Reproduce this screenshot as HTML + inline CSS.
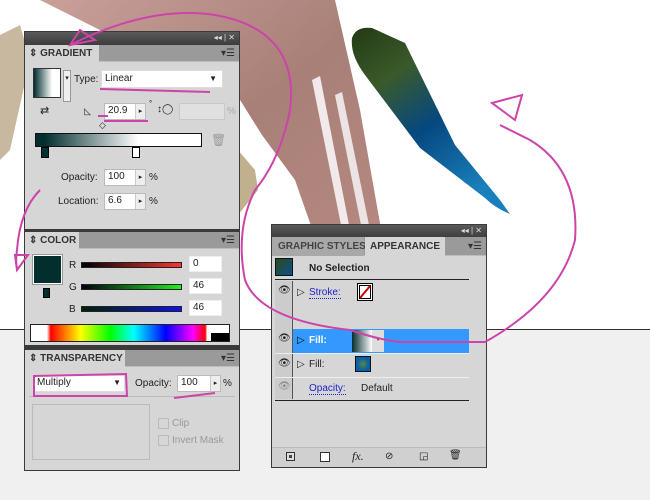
<!DOCTYPE html>
<html><head><meta charset="utf-8"><style>
*{margin:0;padding:0;box-sizing:border-box;white-space:nowrap}
body{width:650px;height:500px;position:relative;overflow:hidden;background:#fff;font-family:"Liberation Sans",sans-serif;font-size:10px;color:#222}
.abs{position:absolute}
.pan{position:absolute;background:#d6d6d6;border:1px solid #3a3a3a}
.topbar{position:absolute;left:0;right:0;top:0;height:13px;background:linear-gradient(#5a5a5a,#3c3c3c);color:#ddd;font-size:8px;text-align:right;padding-right:4px;line-height:12px}
.tabrow{position:absolute;left:0;right:0;height:17px;background:#9a9a9a;border-bottom:1px solid #bdbdbd}
.tab{position:absolute;left:0;top:0;height:17px;background:#d6d6d6;font-weight:bold;color:#333;font-size:10px;line-height:17px;padding-left:4px}
.menu{position:absolute;right:4px;top:3px;font-size:10px;color:#333}
.inp{position:absolute;background:#fff;border:1px solid #bbb;font-size:10px;line-height:14px;padding-left:3px}
.arr{position:absolute;width:10px;border-left:1px solid #ccc;background:#eee;font-size:7px;text-align:center}
.lbl{position:absolute;font-size:10px}
</style></head><body>
<div class="abs" style="left:0;top:329px;width:650px;height:171px;background:#f0f0f0;border-top:1px solid #333"></div>
<svg class="abs" style="left:0;top:0" width="650" height="330">
<defs>
<linearGradient id="br" x1="0" y1="0" x2="1" y2="1"><stop offset="0" stop-color="#caa09a"/><stop offset=".5" stop-color="#a88078"/><stop offset="1" stop-color="#b88a82"/></linearGradient>
<linearGradient id="kn" x1="0" y1="0" x2="0.6" y2="1"><stop offset="0" stop-color="#233a14"/><stop offset=".3" stop-color="#3a5a2a"/><stop offset=".6" stop-color="#064880"/><stop offset="1" stop-color="#1a80bb"/></linearGradient>
</defs>
<polygon points="0,35 20,25 30,60 10,150 0,160" fill="#c8b8a0"/>
<polygon points="238,150 255,170 258,190 238,215" fill="#c0b08e"/>
<polygon points="40,0 335,0 360,110 390,280 330,280 295,180 262,135 240,100" fill="url(#br)"/>
<polygon points="312,80 320,76 350,230 342,230" fill="#f2eaea"/>
<polygon points="335,95 342,92 370,230 362,230" fill="#ece4e4"/>
<path d="M352,38 Q356,26 372,28 L405,43 L455,145 L500,200 L510,214 Q495,208 485,198 L420,148 L365,75 Q350,55 352,38Z" fill="url(#kn)"/>
</svg>

<div class="pan" style="left:24px;top:31px;width:216px;height:440px">
 <div class="topbar">◂◂ | ✕</div>
 <div class="tabrow" style="top:13px"><div class="tab" style="width:74px">⇕ GRADIENT</div><div class="menu">▾☰</div></div>
 <div class="abs" style="left:8px;top:36px;width:28px;height:30px;border:1px solid #333;background:linear-gradient(90deg,#032e2e,#fff 70%)"></div>
 <div class="abs" style="left:38px;top:38px;width:8px;height:32px;background:#eee;border:1px solid #999;font-size:7px;line-height:16px;text-align:center">▾</div>
 <div class="lbl" style="left:49px;top:42px">Type:</div>
 <div class="inp" style="left:76px;top:38px;width:122px;height:18px;border-color:#ddd;line-height:16px">Linear<span style="position:absolute;right:5px;top:0;font-size:8px">▼</span></div>
 <div class="lbl" style="left:15px;top:72px;font-size:11px">⇄</div>
 <div class="lbl" style="left:59px;top:74px;font-size:9px">◺</div>
 <div class="inp" style="left:79px;top:71px;width:42px;height:17px">20.9<span class="arr" style="right:0;top:0;height:15px;line-height:15px">▸</span></div>
 <div class="lbl" style="left:124px;top:67px;font-size:8px">°</div>
 <div class="lbl" style="left:132px;top:72px">↕◯</div>
 <div class="inp" style="left:154px;top:71px;width:46px;height:17px;background:#e0e0e0;border-color:#c8c8c8"></div>
 <div class="lbl" style="left:202px;top:74px;color:#aaa">%</div>
 <div class="lbl" style="left:74px;top:88px;font-size:9px">◇</div>
 <div class="abs" style="left:10px;top:101px;width:167px;height:14px;border:1px solid #111;background:linear-gradient(90deg,#032e2e 5%,#fff 62%)"></div>
 <div class="lbl" style="left:186px;top:101px;color:#999;font-size:12px">🗑</div>
 <div class="abs" style="left:16px;top:115px;width:8px;height:11px;background:#043030;border:1px solid #000"></div>
 <div class="abs" style="left:107px;top:115px;width:8px;height:11px;background:#fff;border:1px solid #000"></div>
 <div class="lbl" style="left:36px;top:140px">Opacity:</div>
 <div class="inp" style="left:79px;top:137px;width:42px;height:17px">100<span class="arr" style="right:0;top:0;height:15px;line-height:15px">▸</span></div>
 <div class="lbl" style="left:124px;top:140px">%</div>
 <div class="lbl" style="left:33px;top:164px">Location:</div>
 <div class="inp" style="left:79px;top:161px;width:42px;height:17px">6.6<span class="arr" style="right:0;top:0;height:15px;line-height:15px">▸</span></div>
 <div class="lbl" style="left:124px;top:164px">%</div>

 <div class="abs" style="left:0;top:197px;width:214px;height:3px;background:#3a3a3a"></div>
 <div class="tabrow" style="top:200px"><div class="tab" style="width:54px">⇕ COLOR</div><div class="menu">▾☰</div></div>
 <div class="abs" style="left:8px;top:223px;width:29px;height:29px;background:#032e2e;border:1px solid #fff;outline:1px solid #999"></div>
 <div class="abs" style="left:18px;top:256px;width:7px;height:10px;background:#032e2e;border:1px solid #000"></div>
 <div class="lbl" style="left:44px;top:228px">R</div>
 <div class="abs" style="left:56px;top:230px;width:101px;height:6px;border:1px solid #222;background:linear-gradient(90deg,#000,#f33)"></div>
 <div class="lbl" style="left:44px;top:250px">G</div>
 <div class="abs" style="left:56px;top:252px;width:101px;height:6px;border:1px solid #222;background:linear-gradient(90deg,#001,#2e2)"></div>
 <div class="lbl" style="left:44px;top:272px">B</div>
 <div class="abs" style="left:56px;top:274px;width:101px;height:6px;border:1px solid #222;background:linear-gradient(90deg,#020,#11e)"></div>
 <div class="inp" style="left:164px;top:224px;width:33px;height:16px;border-color:#eee">0</div>
 <div class="inp" style="left:164px;top:246px;width:33px;height:16px;border-color:#eee">46</div>
 <div class="inp" style="left:164px;top:268px;width:33px;height:16px;border-color:#eee">46</div>
 <div class="abs" style="left:5px;top:292px;width:200px;height:18px;border:1px solid #222;background:linear-gradient(90deg,#fff 0 8%,#f00 10%,#ff0 25%,#0f0 40%,#0ff 52%,#00f 68%,#f0f 82%,#f00 88%,#fff 89%);"></div>
 <div class="abs" style="left:186px;top:301px;width:18px;height:8px;background:#000"></div>
 <div class="abs" style="left:0;top:313px;width:214px;height:5px;background:#3a3a3a"></div>
 <div class="tabrow" style="top:318px"><div class="tab" style="width:100px">⇕ TRANSPARENCY</div><div class="menu">▾☰</div></div>
 <div class="inp" style="left:8px;top:343px;width:92px;height:17px;border-color:#ddd">Multiply<span style="position:absolute;right:3px;top:0;font-size:8px">▼</span></div>
 <div class="lbl" style="left:110px;top:346px">Opacity:</div>
 <div class="inp" style="left:152px;top:343px;width:44px;height:17px">100<span class="arr" style="right:0;top:0;height:15px;line-height:15px">▸</span></div>
 <div class="lbl" style="left:198px;top:346px">%</div>
 <div class="abs" style="left:4px;top:364px;width:206px;height:1px;background:#bbb"></div>
 <div class="abs" style="left:7px;top:372px;width:118px;height:56px;border:1px solid #bbb"></div>
 <div class="abs" style="left:133px;top:386px;width:11px;height:11px;border:1px solid #bbb"></div>
 <div class="lbl" style="left:147px;top:386px;color:#999">Clip</div>
 <div class="abs" style="left:133px;top:403px;width:11px;height:11px;border:1px solid #bbb"></div>
 <div class="lbl" style="left:147px;top:403px;color:#999">Invert Mask</div>
</div>

<div class="pan" style="left:271px;top:224px;width:216px;height:244px">
 <div class="topbar">◂◂ | ✕</div>
 <div class="tabrow" style="top:12px;height:19px">
  <div class="abs" style="left:0;top:0;width:92px;height:19px;background:#a8a8a8;color:#444;font-weight:bold;line-height:19px;padding-left:6px">GRAPHIC STYLES</div>
  <div class="abs" style="left:93px;top:0;width:80px;height:19px;background:#d6d6d6;color:#333;font-weight:bold;line-height:19px;padding-left:5px">APPEARANCE</div>
  <div class="menu" style="top:4px">▾☰</div></div>
 <div class="abs" style="left:3px;top:33px;width:194px;height:178px;background:#d6d6d6"></div>
 <div class="abs" style="left:3px;top:54px;width:194px;height:1px;background:#222"></div>
 <div class="abs" style="left:3px;top:33px;width:18px;height:18px;border:1px solid #111;background:linear-gradient(135deg,#2a4a18,#0a5090)"></div>
 <div class="lbl" style="left:37px;top:38px;font-weight:bold">No Selection</div>
 <div class="abs" style="left:3px;top:56px;width:18px;height:118px;background:#ccc;border-right:1px solid #555"></div>
 <div class="lbl" style="left:6px;top:60px">👁</div>
 <div class="lbl" style="left:25px;top:62px">▷</div>
 <div class="lbl" style="left:37px;top:62px;color:#22c;border-bottom:1px dotted #22c">Stroke:</div>
 <div class="abs" style="left:85px;top:58px;width:16px;height:18px;border:1px solid #000;background:#fff;box-shadow:inset 0 0 0 1px #fff, inset 0 0 0 2px #000"><svg width="14" height="16" style="position:absolute;left:0;top:0"><line x1="2" y1="14" x2="12" y2="2" stroke="#c00" stroke-width="2"/></svg></div>
 <div class="abs" style="left:21px;top:104px;width:176px;height:24px;background:#3399ff"></div>
 <div class="abs" style="left:3px;top:104px;width:18px;height:24px;background:#ccc;border-right:1px solid #555"></div>
 <div class="lbl" style="left:6px;top:108px">👁</div>
 <div class="lbl" style="left:25px;top:110px;color:#000">▷</div>
 <div class="lbl" style="left:37px;top:110px;color:#fff;font-weight:bold">Fill:</div>
 <div class="abs" style="left:80px;top:105px;width:20px;height:22px;background:linear-gradient(90deg,#032e2e,#fff)"></div>
 <div class="abs" style="left:100px;top:105px;width:12px;height:22px;background:#ddd;font-size:7px;text-align:center;line-height:20px">▾</div>
 <div class="abs" style="left:3px;top:128px;width:194px;height:1px;background:#eee"></div>
 <div class="lbl" style="left:6px;top:133px">👁</div>
 <div class="lbl" style="left:25px;top:134px">▷</div>
 <div class="lbl" style="left:37px;top:134px">Fill:</div>
 <div class="abs" style="left:83px;top:131px;width:16px;height:16px;border:1px solid #111;background:radial-gradient(#5a8a3a,#0a60a8 60%)"></div>
 <div class="abs" style="left:3px;top:152px;width:194px;height:1px;background:#eee"></div>
 <div class="lbl" style="left:6px;top:156px;color:#888">👁</div>
 <div class="lbl" style="left:37px;top:158px;color:#22c;border-bottom:1px dotted #22c">Opacity:</div>
 <div class="lbl" style="left:89px;top:158px">Default</div>
 <div class="abs" style="left:3px;top:175px;width:194px;height:1px;background:#222"></div>
 <div class="abs" style="left:0;top:222px;width:214px;height:20px;background:#d0d0d0;border-top:1px solid #bbb"></div>
 <div class="abs" style="left:14px;top:227px;width:9px;height:9px;border:1px solid #333;background:#444;box-shadow:inset 0 0 0 2px #ddd"></div>
 <div class="abs" style="left:48px;top:227px;width:10px;height:10px;border:1px solid #333;background:#fff"></div>
 <div class="lbl" style="left:80px;top:224px;font-style:italic;font-family:'Liberation Serif',serif;font-size:12px">fx.</div>
 <div class="lbl" style="left:113px;top:226px">⊘</div>
 <div class="lbl" style="left:147px;top:226px">◲</div>
 <div class="lbl" style="left:177px;top:225px">🗑</div>
</div>

<svg class="abs" style="left:0;top:0" width="650" height="500" fill="none" stroke="#cc44aa" stroke-width="2">
<path d="M70,45 Q150,5 215,15 Q300,30 290,110 Q280,160 255,190 Q235,230 245,280 Q260,320 350,330 Q380,340 400,342"/>
<path d="M70,45 L95,40 L80,30 Z"/>
<path d="M40,190 Q20,210 17,250 Q15,265 18,270"/>
<path d="M17,270 L28,255 L15,255Z"/>
<path d="M400,342 L485,342 Q560,300 575,240 Q580,170 530,140 Q510,130 500,125"/>
<path d="M492,103 L522,95 L515,120 Z"/>
<path d="M100,89 L210,92"/><path d="M104,121 L148,121"/><path d="M98,116 L108,116"/>
<path d="M34,376 L126,374 L127,396 L34,396 Z"/><path d="M174,398 L215,393"/>
</svg>
</body></html>
